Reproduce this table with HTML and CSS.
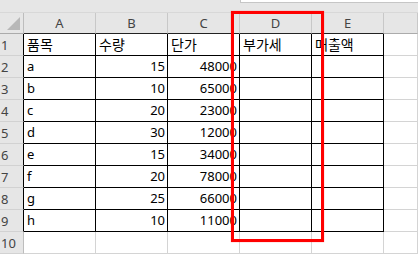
FILE: index.html
```html
<!DOCTYPE html>
<html lang="ko">
<head>
    <meta charset="UTF-8">
    <meta name="viewport" content="width=device-width, initial-scale=1.0">
    <title>Sheet1</title>
    <link rel="stylesheet" href="styles.css">
</head>
<body>
    <div class="toolbar">
        <div class="formula-box"></div>
    </div>

    <div class="sheet">
        <!-- column headers -->
        <div class="corner">
            <svg width="24" height="22" viewBox="0 0 24 22">
                <polygon points="20,4 20,17 7,17" fill="#b8b8b8"/>
            </svg>
        </div>
        <div class="col-head edge">A</div>
        <div class="col-head edge">B</div>
        <div class="col-head edge">C</div>
        <div class="col-head edge">D</div>
        <div class="col-head edge">E</div>
        <div class="col-head"></div>

        <!-- row 1 -->
        <div class="row-head edge">1</div>
        <div class="cell boxed ko">품목</div>
        <div class="cell boxed ko">수량</div>
        <div class="cell boxed ko">단가</div>
        <div class="cell boxed ko">부가세</div>
        <div class="cell boxed ko">매출액</div>
        <div class="cell"></div>

        <div class="row-head edge">2</div>
        <div class="cell boxed">a</div>
        <div class="cell boxed num">15</div>
        <div class="cell boxed num">48000</div>
        <div class="cell boxed"></div>
        <div class="cell boxed"></div>
        <div class="cell"></div>

        <div class="row-head edge">3</div>
        <div class="cell boxed">b</div>
        <div class="cell boxed num">10</div>
        <div class="cell boxed num">65000</div>
        <div class="cell boxed"></div>
        <div class="cell boxed"></div>
        <div class="cell"></div>

        <div class="row-head edge">4</div>
        <div class="cell boxed">c</div>
        <div class="cell boxed num">20</div>
        <div class="cell boxed num">23000</div>
        <div class="cell boxed"></div>
        <div class="cell boxed"></div>
        <div class="cell"></div>

        <div class="row-head edge">5</div>
        <div class="cell boxed">d</div>
        <div class="cell boxed num">30</div>
        <div class="cell boxed num">12000</div>
        <div class="cell boxed"></div>
        <div class="cell boxed"></div>
        <div class="cell"></div>

        <div class="row-head edge">6</div>
        <div class="cell boxed">e</div>
        <div class="cell boxed num">15</div>
        <div class="cell boxed num">34000</div>
        <div class="cell boxed"></div>
        <div class="cell boxed"></div>
        <div class="cell"></div>

        <div class="row-head edge">7</div>
        <div class="cell boxed">f</div>
        <div class="cell boxed num">20</div>
        <div class="cell boxed num">78000</div>
        <div class="cell boxed"></div>
        <div class="cell boxed"></div>
        <div class="cell"></div>

        <div class="row-head edge">8</div>
        <div class="cell boxed">g</div>
        <div class="cell boxed num">25</div>
        <div class="cell boxed num">66000</div>
        <div class="cell boxed"></div>
        <div class="cell boxed"></div>
        <div class="cell"></div>

        <div class="row-head edge">9</div>
        <div class="cell boxed">h</div>
        <div class="cell boxed num">10</div>
        <div class="cell boxed num">11000</div>
        <div class="cell boxed"></div>
        <div class="cell boxed"></div>
        <div class="cell"></div>

        <div class="row-head">10</div>
        <div class="cell"></div>
        <div class="cell"></div>
        <div class="cell"></div>
        <div class="cell"></div>
        <div class="cell"></div>
        <div class="cell"></div>
    </div>

    <!-- highlight around column D -->
    <div class="highlight"></div>
</body>
</html>
```

FILE: styles.css
```css
* {
    box-sizing: border-box;
}

body {
    margin: 0;
    background: #fff;
    font-family: 'Noto Sans', 'Noto Sans CJK KR', sans-serif;
    overflow: hidden;
    position: relative;
}

.toolbar {
    height: 13px;
    background: #e6e6e6;
    border-bottom: 1px solid #d8d8d8;
    padding-left: 240px;
}

.formula-box {
    height: 3px;
    background: #fff;
    border-left: 1px solid #c6c6c6;
    border-bottom: 1px solid #c6c6c6;
}

.sheet {
    display: grid;
    grid-template-columns: 24px repeat(5, 72px) 1fr;
    grid-template-rows: 21px;
    grid-auto-rows: 22px;
}

.corner,
.col-head,
.row-head {
    background: #e6e6e6;
    color: #444;
    font-size: 13px;
}

.corner {
    border-right: 1px solid #bdbdbd;
    border-bottom: 1px solid #ababab;
}

.corner svg {
    display: block;
}

.col-head {
    display: flex;
    align-items: center;
    justify-content: center;
    border-right: 1px solid #c8c8c8;
    border-bottom: 1px solid #ababab;
}

.col-head.edge {
    border-bottom-color: #222;
}

.row-head {
    display: flex;
    align-items: center;
    padding-left: 1px;
    border-right: 1px solid #bdbdbd;
    border-bottom: 1px solid #d2d2d2;
}

.row-head.edge {
    border-right-color: #000;
}

.cell {
    display: flex;
    align-items: center;
    padding: 0 3px;
    border-right: 1px solid #d4d4d4;
    border-bottom: 1px solid #d4d4d4;
    font-size: 13px;
    line-height: 21px;
    color: #000;
    white-space: nowrap;
}

.cell.boxed {
    border-right-color: #000;
    border-bottom-color: #000;
}

.cell.num {
    justify-content: flex-end;
    padding-right: 2px;
}

.cell.ko {
    font-size: 14px;
}

.highlight {
    position: absolute;
    left: 231px;
    top: 11px;
    width: 93px;
    height: 231px;
    border: 3px solid #ff0000;
    box-shadow: 0 0 1px rgba(255, 0, 0, 0.5);
}
```
